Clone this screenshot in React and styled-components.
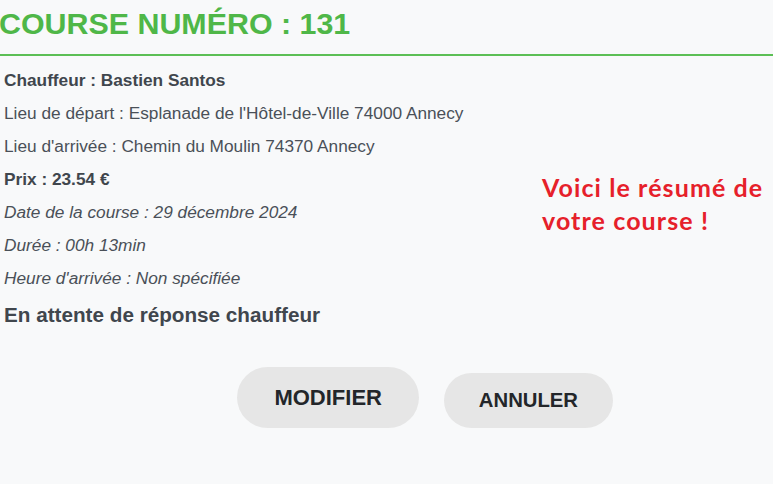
import React from "react"
import styled, { createGlobalStyle } from "styled-components"

const GlobalStyle = createGlobalStyle`
  html, body {
    margin: 0;
    padding: 0;
    background: #f8f9fa;
  }
  body {
    font-family: "Liberation Sans", Arial, sans-serif;
    overflow: hidden;
  }
`

const Page = styled.div`
  width: 773px;
  height: 484px;
  background: #f8f9fa;
`

const Header = styled.header`
  padding: 6px 0 14px;
  border-bottom: 2px solid #5cbf55;
  h1 {
    margin: 0 0 0 -1px;
    color: #4fb748;
    font-size: 30.4px;
    font-weight: 700;
    line-height: 34px;
  }
`

const Body = styled.div`
  display: flex;
  padding-top: 8px;
`

const Details = styled.div`
  width: 538px;
  padding-left: 4px;
  color: #4a5058;
`

const Row = styled.div`
  font-size: 17.25px;
  line-height: 33px;
  font-weight: ${(p) => (p.bold ? 700 : 400)};
  font-style: ${(p) => (p.italic ? "italic" : "normal")};
  color: ${(p) => (p.bold ? "#40464d" : "#4a5058")};
`

const Status = styled.div`
  margin-top: 3px;
  font-size: 20.7px;
  font-weight: 700;
  line-height: 33px;
  color: #40464d;
`

const Summary = styled.aside`
  width: 231px;
  padding-top: 107px;
  color: #e6202a;
  font-family: Lato, "Open Sans", sans-serif;
  font-size: 25px;
  letter-spacing: 1.1px;
  font-weight: 700;
  line-height: 33px;
`

const Actions = styled.div`
  display: flex;
  align-items: flex-end;
  gap: 25px;
  padding-left: 237px;
  margin-top: 36px;
`

const Button = styled.button`
  border: none;
  border-radius: 40px;
  background: #e6e6e6;
  color: #23262a;
  font-family: "Liberation Sans", Arial, sans-serif;
  font-weight: 700;
  font-size: ${(p) => p.size}px;
  line-height: normal;
  padding: 0.8em 1.7em;
  cursor: pointer;
`

export default function App() {
  return (
    <Page>
      <GlobalStyle />
      <Header>
        <h1>COURSE NUMÉRO : 131</h1>
      </Header>
      <Body>
        <Details>
          <Row bold>Chauffeur : Bastien Santos</Row>
          <Row>Lieu de départ : Esplanade de l'Hôtel-de-Ville 74000 Annecy</Row>
          <Row>Lieu d'arrivée : Chemin du Moulin 74370 Annecy</Row>
          <Row bold>Prix : 23.54 €</Row>
          <Row italic>Date de la course : 29 décembre 2024</Row>
          <Row italic>Durée : 00h 13min</Row>
          <Row italic>Heure d'arrivée : Non spécifiée</Row>
          <Status>En attente de réponse chauffeur</Status>
        </Details>
        <Summary>
          Voici le résumé de votre course !
        </Summary>
      </Body>
      <Actions>
        <Button size={22}>MODIFIER</Button>
        <Button size={20.3}>ANNULER</Button>
      </Actions>
    </Page>
  )
}
